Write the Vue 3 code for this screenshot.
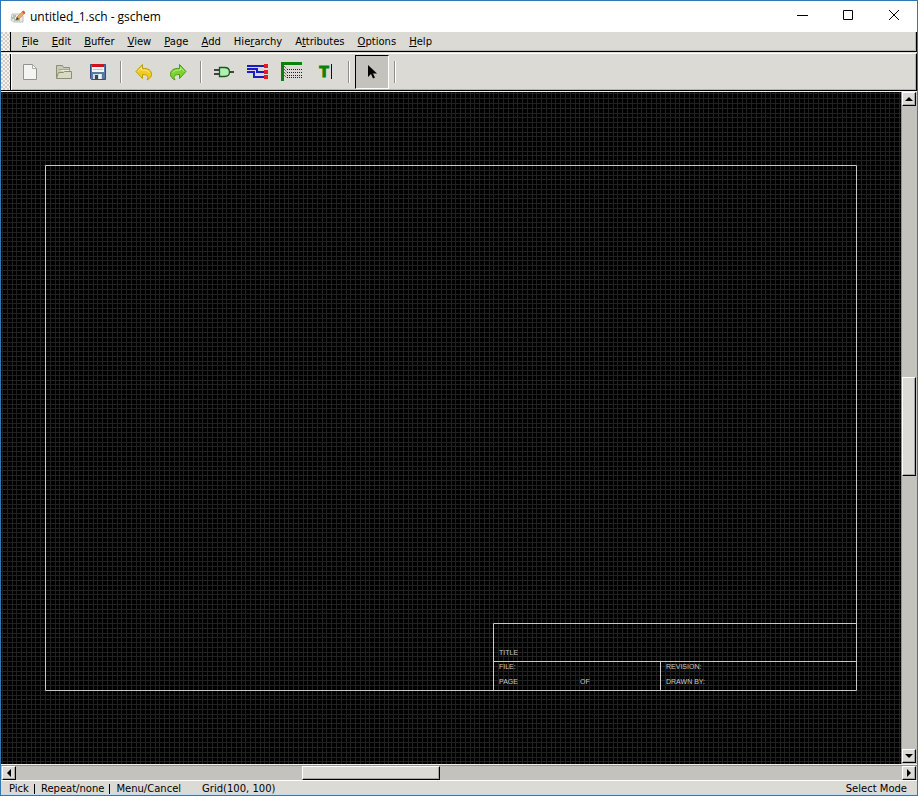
<script setup>
const title = 'untitled_1.sch - gschem'

const menus = [
  ['', 'F', 'ile'],
  ['', 'E', 'dit'],
  ['', 'B', 'uffer'],
  ['', 'V', 'iew'],
  ['', 'P', 'age'],
  ['', 'A', 'dd'],
  ['Hie', 'r', 'archy'],
  ['A', 't', 'tributes'],
  ['', 'O', 'ptions'],
  ['', 'H', 'elp'],
]

// Scroll positions, as shares of the track: before, thumb, after
const vertical = [271, 97, 273]
const horizontal = [286, 136, 462]

// Sheet frame and the 100-mil grid aligned to it
const frame = { x: 44, y: 73, w: 811, h: 525 }
const step = frame.w / 170
const view = { w: 900, h: 672 }

function gridPath() {
  let d = ''
  for (let k = -9; k < 182; k++) {
    const x = Math.round(frame.x + k * step)
    if (x >= 0 && x < view.w) d += `M${x} 0h1v${view.h}h-1z`
  }
  for (let k = -16; k < 128; k++) {
    const y = Math.round(frame.y + k * step)
    if (y >= 0 && y < view.h) d += `M0 ${y}h${view.w}v1h-${view.w}z`
  }
  return d
}
const grid = gridPath()

const labels = [
  { t: 'TITLE', x: 498, y: 563 },
  { t: 'FILE:', x: 498, y: 577 },
  { t: 'PAGE', x: 498, y: 592 },
  { t: 'OF', x: 579, y: 592 },
  { t: 'REVISION:', x: 665, y: 577 },
  { t: 'DRAWN BY:', x: 665, y: 592 },
]
</script>

<template>
  <div class="window">
    <header class="titlebar">
      <svg class="app-icon" width="16" height="16" viewBox="0 0 16 16" aria-hidden="true">
        <path d="M2 5h8l3 2v6H4L1 11z" fill="#e9ece8" stroke="#b9c0ba" />
        <path d="M3 7h3M2 9h3M4 11h6" stroke="#6f9a84" />
        <path d="M6 11l1-3 6-6 2 2-6 6z" fill="#efaa62" stroke="#c4804a" stroke-width=".7" />
        <path d="M12 3l1.500-1.500 2 2L14 5z" fill="#d8553c" />
        <path d="M6 11l1-3 2 2z" fill="#423a30" />
      </svg>
      <h1>{{ title }}</h1>
      <button class="caption" aria-label="Minimize">
        <svg width="12" height="12" viewBox="0 0 12 12"><path d="M1 6.500h11" stroke="#000" fill="none" /></svg>
      </button>
      <button class="caption" aria-label="Maximize">
        <svg width="12" height="12" viewBox="0 0 12 12"><path d="M1.500 1.500h9v9h-9z" stroke="#000" fill="none" /></svg>
      </button>
      <button class="caption" aria-label="Close">
        <svg width="12" height="12" viewBox="0 0 12 12"><path d="M1 1l10 10M11 1L1 11" stroke="#000" fill="none" /></svg>
      </button>
    </header>

    <div class="dock">
      <span class="handle"></span>
      <nav class="menubar">
        <button v-for="m in menus" :key="m.join('')">{{ m[0] }}<u>{{ m[1] }}</u>{{ m[2] }}</button>
      </nav>
    </div>

    <div class="dock">
      <span class="handle"></span>
      <div class="toolbar" role="toolbar">
        <button aria-label="New">
          <svg width="24" height="24" viewBox="0 0 24 24">
            <path d="M5.500 4.500h9l4 4v11h-13z" fill="#f4f4f2" stroke="#92928e" />
            <path d="M14.500 4.500v4h4z" fill="#fff" stroke="#a8a8a4" />
          </svg>
        </button>
        <button aria-label="Open">
          <svg width="24" height="24" viewBox="0 0 24 24">
            <path d="M4.500 18.500v-13h6l1 2h6v3" fill="#c9ccb0" stroke="#8b8f78" />
            <path d="M6.500 9.500h11v4" fill="#eeefe4" stroke="#a4a792" />
            <path d="M4.500 18.500l2-6h5l1-1h7v7z" fill="#d8dbc2" stroke="#8b8f78" />
          </svg>
        </button>
        <button aria-label="Save">
          <svg width="24" height="24" viewBox="0 0 24 24">
            <path d="M4.500 4.500h15v15h-14l-1-1z" fill="#537aaa" stroke="#2c4f7c" />
            <path d="M6 4h12v8H6z" fill="#f5f5f5" />
            <path d="M6 4h12v3H6z" fill="#cb1420" />
            <path d="M7 9.500h10" stroke="#c2c4c6" />
            <path d="M7 14h9v5H7z" fill="#d6d8da" />
            <path d="M9 15h3v4H9z" fill="#34465c" />
            <path d="M13 14h2v5h-2z" fill="#f4f4f4" />
          </svg>
        </button>
        <span class="sep"></span>
        <button aria-label="Undo">
          <svg width="24" height="24" viewBox="0 0 24 24">
            <path d="M10.500 4.500v4c6-.500 9 2 9 6 0 2-1.500 4-4.500 5.500 2-3.500 1-5.500-4.500-5.500v4L4 11.500z" fill="#f2cc1e" stroke="#c39a08" />
            <path d="M6 11.500l3.500-4v2.500c4 0 7 .5 8 3" fill="none" stroke="#fbea85" />
          </svg>
        </button>
        <button aria-label="Redo">
          <svg width="24" height="24" viewBox="0 0 24 24">
            <path d="M13.500 4.500v4c-6-.500-9 2-9 6 0 2 1.500 4 4.500 5.500-2-3.500-1-5.500 4.500-5.500v4l6.500-7z" fill="#7bd32c" stroke="#4b9a10" />
            <path d="M18 11.500l-3.500-4v2.500c-4 0-7 .5-8 3" fill="none" stroke="#b8f07d" />
          </svg>
        </button>
        <span class="sep"></span>
        <button aria-label="Add component">
          <svg width="24" height="24" viewBox="0 0 24 24">
            <path d="M2 10h7M2 14h7M17 12h5" stroke="#111" stroke-width="1.500" />
            <path d="M7.500 7.500h5c3.500 0 5 2 5 4.500s-1.500 4.500-5 4.500h-5z" fill="#b2f0b2" stroke="#14591f" stroke-width="1.300" />
          </svg>
        </button>
        <button aria-label="Add net">
          <svg width="24" height="24" viewBox="0 0 24 24">
            <path d="M1 6h18M1 9h10v3h8M1 12h7v5h11" fill="none" stroke="#1b1bc8" stroke-width="2" />
            <path d="M18 4h4v4h-4zM18 10h4v4h-4zM18 15h4v4h-4z" fill="#e21a2c" />
          </svg>
        </button>
        <button aria-label="Add bus">
          <svg width="24" height="24" viewBox="0 0 24 24">
            <path d="M2.500 21V3.500H22" fill="none" stroke="#078307" stroke-width="3" />
            <path d="M4 6l3 3M4 9l3 3M4 12l3 3M4 15l3 3" fill="none" stroke="#333" stroke-dasharray="1 1" />
            <path d="M7 9.500h15M7 12.500h15M7 15.500h15M7 17.500h15" fill="none" stroke="#222" stroke-dasharray="1 1" />
          </svg>
        </button>
        <button aria-label="Add text">
          <svg width="24" height="24" viewBox="0 0 24 24">
            <text x="5" y="17" class="glyph">T</text>
            <path d="M17.500 4v15" stroke="#111" />
          </svg>
        </button>
        <span class="sep"></span>
        <button class="active" aria-label="Select mode" aria-pressed="true">
          <svg width="24" height="24" viewBox="0 0 24 24">
            <path d="M8 5v12l3-3 2 4.500 2-1-2-4h4z" fill="#000" />
          </svg>
        </button>
        <span class="sep"></span>
      </div>
    </div>

    <main class="workspace">
      <div class="canvas">
        <svg :viewBox="`0 0 ${view.w} ${view.h}`" preserveAspectRatio="xMidYMid slice" role="img" aria-label="Schematic sheet">
          <path :d="grid" fill="#212121" />
          <g fill="none" stroke="#c8c8c8">
            <path d="M44.500 73.500h811v525h-811z" />
            <path d="M492.500 598v-66.500h363M492.500 569.500h363M659.500 569.500v29" />
          </g>
          <text v-for="l in labels" :key="l.t" :x="l.x" :y="l.y" class="label">{{ l.t }}</text>
        </svg>
      </div>
      <div class="scroll vert">
        <button class="bevel arrow" aria-label="Scroll up">
          <svg width="8" height="8" viewBox="0 0 8 8"><path d="M4 2l4 4H0z" /></svg>
        </button>
        <span :style="{ flexGrow: vertical[0] }"></span>
        <span class="bevel thumb" :style="{ flexGrow: vertical[1] }"></span>
        <span :style="{ flexGrow: vertical[2] }"></span>
        <button class="bevel arrow" aria-label="Scroll down">
          <svg width="8" height="8" viewBox="0 0 8 8"><path d="M4 6l4-4H0z" /></svg>
        </button>
      </div>
    </main>

    <div class="scroll horiz">
      <button class="bevel arrow" aria-label="Scroll left">
        <svg width="8" height="8" viewBox="0 0 8 8"><path d="M2 4l4-4v8z" /></svg>
      </button>
      <span :style="{ flexGrow: horizontal[0] }"></span>
      <span class="bevel thumb" :style="{ flexGrow: horizontal[1] }"></span>
      <span :style="{ flexGrow: horizontal[2] }"></span>
      <button class="bevel arrow" aria-label="Scroll right">
        <svg width="8" height="8" viewBox="0 0 8 8"><path d="M6 4L2 0v8z" /></svg>
      </button>
    </div>

    <footer class="status">
      <span>Pick</span><i></i><span>Repeat/none</span><i></i><span>Menu/Cancel</span>
      <span class="grid-info">Grid(100, 100)</span>
      <span class="mode">Select Mode</span>
    </footer>
  </div>
</template>

<style>
body {
  background: #dcdad5;
}
</style>

<style scoped>
.window {
  box-sizing: border-box;
  display: flex;
  flex-direction: column;
  height: 100vh;
  border: 1px solid #2f78b4;
  background: #dcdad5;
  color: #000;
  font: 10px/14px "DejaVu Sans", sans-serif;
}
button {
  margin: 0;
  padding: 0;
  border: 0;
  background: none;
  color: inherit;
  font: inherit;
}
svg {
  display: block;
}
.titlebar {
  display: flex;
  align-items: center;
  height: 31px;
  padding-left: 9px;
  background: #fff;
}
.titlebar h1 {
  flex: 1;
  margin: 0 0 0 4px;
  font: 12px/16px "Open Sans", sans-serif;
}
.caption {
  display: flex;
  align-items: center;
  align-self: flex-start;
  justify-content: center;
  width: 46px;
  height: 28px;
}
.dock {
  display: flex;
  border-top: 1px solid #fff;
  border-bottom: 1px solid #000;
  border-right: 1px solid #000;
  box-shadow: inset 0 -1px #b5b3ae, inset -1px 0 #b5b3ae;
}
.titlebar + .dock {
  border-top: 0;
  margin-bottom: 1px;
}
.handle {
  width: 9px;
  border-right: 1px solid #000;
  background: repeating-conic-gradient(#f4f3f1 0 25%, #d0cec9 0 50%) 0 0 / 4px 4px;
}
.menubar {
  display: flex;
  gap: 13px;
  height: 19px;
  padding-left: 11px;
}
.menubar button {
  line-height: 19px;
}
.menubar u {
  text-underline-offset: 1px;
}
.toolbar {
  display: flex;
  align-items: center;
  height: 36px;
  padding-left: 1px;
  border-left: 1px solid #fff;
}
.toolbar button {
  box-sizing: border-box;
  display: flex;
  align-items: center;
  justify-content: center;
  width: 34px;
  height: 34px;
}
.toolbar .active {
  border: 1px solid;
  border-color: #000 #fff #fff #000;
  background: #c4c2bd;
}
.sep {
  box-sizing: border-box;
  width: 2px;
  height: 22px;
  margin: 0 5px;
  border-left: 1px solid #8f8d89;
  border-right: 1px solid #fff;
}
.glyph {
  fill: #078307;
  stroke: #078307;
  font: bold 17px "Liberation Mono", monospace;
}
.workspace {
  display: flex;
  flex: 1;
  min-height: 0;
  border-top: 1px solid #f0efec;
  border-bottom: 1px solid #f0efec;
}
.canvas {
  flex: 1;
  min-width: 0;
  background: #000;
}
.canvas svg {
  width: 100%;
  height: 100%;
}
.label {
  fill: #c8c8c8;
  font: 7px "Liberation Sans", sans-serif;
}
.scroll {
  display: flex;
  background: #c4c2bd;
}
.scroll span {
  flex-basis: 0;
}
.vert {
  box-sizing: border-box;
  flex-direction: column;
  width: 16px;
  padding: 0 1px 1px 0;
  border-left: 1px solid #96948f;
}
.horiz {
  height: 14px;
  padding: 0 1px;
  border-top: 1px solid #96948f;
  border-bottom: 1px solid #fff;
}
.bevel {
  box-sizing: border-box;
  border: 1px solid;
  border-color: #fff #000 #000 #fff;
  background: #dcdad5;
  box-shadow: inset -1px -1px #a9a7a2;
}
.arrow {
  display: flex;
  align-items: center;
  justify-content: center;
  flex: 0 0 14px;
  width: 14px;
  height: 14px;
}
.status {
  box-sizing: border-box;
  display: flex;
  height: 14px;
  padding: 1px 10px 0 8px;
  border-bottom: 1px solid #c3dcf0;
}
.status i {
  width: 1px;
  height: 10px;
  margin: 2px 6px 0 5px;
  background: #000;
}
.grid-info {
  margin-left: 21px;
}
.mode {
  margin-left: auto;
}
</style>
